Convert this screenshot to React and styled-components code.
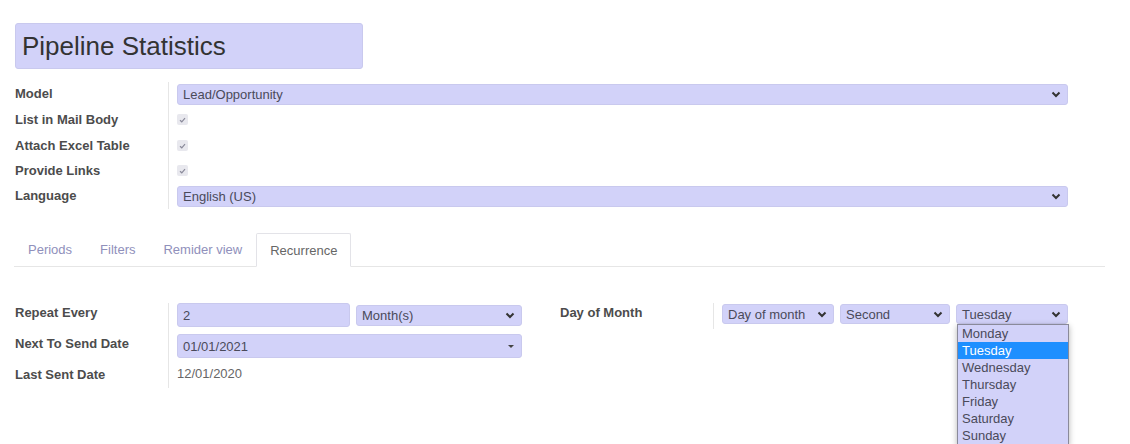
import React from "react";
import styled, { createGlobalStyle } from "styled-components";

const GlobalStyle = createGlobalStyle`
  body {
    margin: 0;
    background: #fff;
    font-family: "Liberation Sans", Arial, sans-serif;
    color: #4c4c4c;
  }
`;

const lavender = "#d2d2f9";

const Page = styled.div`
  padding: 23px 0 0 15px;
  width: 1115px;
  height: 421px;
  overflow: hidden;
  position: relative;
`;

const TitleBox = styled.div`
  width: 348px;
  height: 46px;
  padding-left: 6px;
  background: ${lavender};
  border: 1px solid #c9c9ee;
  border-radius: 3px;
  box-sizing: border-box;
  display: flex;
  align-items: center;
  font-size: 26px;
  color: #333;
`;

const Group = styled.div`
  display: grid;
  grid-template-columns: 153px ${(p) => p.$field}px;
  grid-template-rows: ${(p) => p.$rows};
  margin-top: ${(p) => p.$top || 0}px;
`;

const Label = styled.div`
  font-size: 13px;
  font-weight: 700;
  color: #4c4c4c;
  display: flex;
  align-items: ${(p) => (p.$top ? "flex-start" : "center")};
  padding-top: ${(p) => (p.$top ? "2px" : "0")};
  line-height: 16px;
`;

const Cell = styled.div`
  border-left: 1px solid #e6e6e6;
  padding-left: 8px;
  display: flex;
  align-items: ${(p) => (p.$top ? "flex-start" : "center")};
  gap: ${(p) => p.$gap || 0}px;
  position: relative;
`;

const Box = styled.div`
  width: ${(p) => p.$w}px;
  height: ${(p) => p.$h || 22}px;
  margin-top: ${(p) => p.$mt || 0}px;
  box-sizing: border-box;
  background: ${lavender};
  border: 1px solid #c9c9ee;
  border-radius: 3px;
  display: flex;
  align-items: center;
  justify-content: space-between;
  padding: 0 6px 0 5px;
  font-size: 13px;
  color: #4a4a5a;
  flex-shrink: 0;
`;

const Check = styled.div`
  width: 11px;
  height: 11px;
  border-radius: 2px;
  background: #e8e8ee;
  display: flex;
  align-items: center;
  justify-content: center;
`;

const Plain = styled.div`
  font-size: 13px;
  line-height: 16px;
  padding-top: 1px;
  color: #666;
`;

const Tabs = styled.div`
  display: flex;
  width: 1091px;
  height: 33px;
  margin: 24px 0 0 -1px;
  border-bottom: 1px solid #e6e6e6;
`;

const Tab = styled.div`
  padding: 0 14px;
  font-size: 13px;
  display: flex;
  align-items: center;
  color: ${(p) => (p.$active ? "#666" : "#9090bb")};
  ${(p) =>
    p.$active &&
    `
    padding: 0 13px;
    border: 1px solid #e3e3e8;
    border-bottom: 1px solid #fff;
    border-radius: 2px 2px 0 0;
    margin-bottom: -1px;
    background: #fff;
  `}
`;

const Lower = styled.div`
  display: flex;
  gap: 38px;
  margin-top: 36px;
  align-items: flex-start;
`;

const Menu = styled.div`
  position: absolute;
  left: ${(p) => p.$left}px;
  top: 21px;
  width: 110px;
  background: ${lavender};
  border: 1px solid #8a8a9a;
  box-shadow: 0 2px 6px rgba(0, 0, 0, 0.3);
  z-index: 2;
`;

const Option = styled.div`
  height: 17px;
  line-height: 17px;
  padding-left: 4px;
  font-size: 13px;
  color: ${(p) => (p.$sel ? "#fff" : "#4a4a5a")};
  background: ${(p) => (p.$sel ? "#1e8fff" : "transparent")};
`;

const Chevron = () => (
  <svg width="10" height="7" viewBox="0 0 10 7">
    <path d="M1.5 1.5 L5 5 L8.5 1.5" fill="none" stroke="#333" strokeWidth="2" />
  </svg>
);

const Caret = () => (
  <svg width="8" height="5" viewBox="0 0 8 5">
    <path d="M1 1 H7 L4 4 Z" fill="#444" />
  </svg>
);

const Tick = () => (
  <svg width="7" height="6" viewBox="0 0 7 6">
    <path d="M1 3.2 L2.8 4.8 L6 1.2" fill="none" stroke="#8a8a9a" strokeWidth="1.2" />
  </svg>
);

const Select = ({ w, h, mt, children }) => (
  <Box $w={w} $h={h} $mt={mt}>
    <span>{children}</span>
    <Chevron />
  </Box>
);

const days = ["Monday", "Tuesday", "Wednesday", "Thursday", "Friday", "Saturday", "Sunday"];

export default function App() {
  return (
    <Page>
      <GlobalStyle />
      <TitleBox>Pipeline Statistics</TitleBox>

      <Group $field={900} $rows="24px 27px 25px 25px 26px" $top={13}>
        <Label>Model</Label>
        <Cell>
          <Select w={891} h={21}>Lead/Opportunity</Select>
        </Cell>
        <Label>List in Mail Body</Label>
        <Cell>
          <Check><Tick /></Check>
        </Cell>
        <Label>Attach Excel Table</Label>
        <Cell>
          <Check><Tick /></Check>
        </Cell>
        <Label>Provide Links</Label>
        <Cell>
          <Check><Tick /></Check>
        </Cell>
        <Label>Language</Label>
        <Cell>
          <Select w={891} h={21}>English (US)</Select>
        </Cell>
      </Group>

      <Tabs>
        <Tab>Periods</Tab>
        <Tab>Filters</Tab>
        <Tab>Remider view</Tab>
        <Tab $active>Recurrence</Tab>
      </Tabs>

      <Lower>
        <Group $field={354} $rows="31px 31px 23px">
          <Label $top>Repeat Every</Label>
          <Cell $top $gap={6}>
            <Box $w={173} $h={24}>2</Box>
            <Select w={166} h={21} mt={2}>Month(s)</Select>
          </Cell>
          <Label $top>Next To Send Date</Label>
          <Cell $top>
            <Box $w={345} $h={24}>
              <span>01/01/2021</span>
              <Caret />
            </Box>
          </Cell>
          <Label $top>Last Sent Date</Label>
          <Cell $top>
            <Plain>12/01/2020</Plain>
          </Cell>
        </Group>

        <Group $field={360} $rows="26px">
          <Label $top>Day of Month</Label>
          <Cell $top $gap={6}>
            <Select w={112} h={20} mt={1}>Day of month</Select>
            <Select w={110} h={20} mt={1}>Second</Select>
            <Select w={112} h={20} mt={1}>Tuesday</Select>
            <Menu $left={243}>
              {days.map((d) => (
                <Option key={d} $sel={d === "Tuesday"}>
                  {d}
                </Option>
              ))}
            </Menu>
          </Cell>
        </Group>
      </Lower>
    </Page>
  );
}
